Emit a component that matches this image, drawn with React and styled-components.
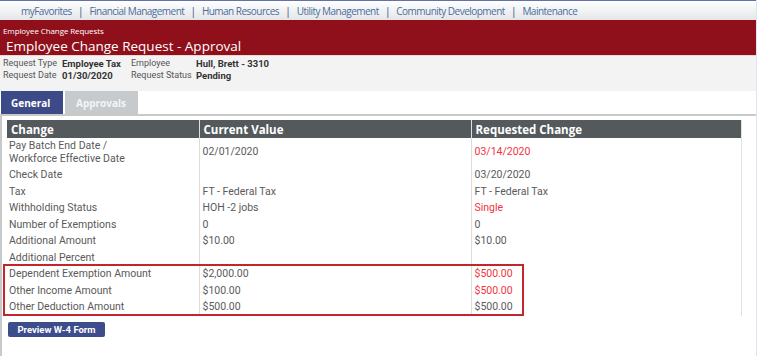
import React from "react";
import styled, { createGlobalStyle } from "styled-components";

const navItems = [
  "myFavorites",
  "Financial Management",
  "Human Resources",
  "Utility Management",
  "Community Development",
  "Maintenance",
];

const rows = [
  { label: ["Pay Batch End Date /", "Workforce Effective Date"], current: "02/01/2020", requested: "03/14/2020", changed: true },
  { label: ["Check Date"], current: "", requested: "03/20/2020" },
  { label: ["Tax"], current: "FT - Federal Tax", requested: "FT - Federal Tax" },
  { label: ["Withholding Status"], current: "HOH -2 jobs", requested: "Single", changed: true },
  { label: ["Number of Exemptions"], current: "0", requested: "0" },
  { label: ["Additional Amount"], current: "$10.00", requested: "$10.00" },
  { label: ["Additional Percent"], current: "", requested: "" },
  { label: ["Dependent Exemption Amount"], current: "$2,000.00", requested: "$500.00", changed: true },
  { label: ["Other Income Amount"], current: "$100.00", requested: "$500.00", changed: true },
  { label: ["Other Deduction Amount"], current: "$500.00", requested: "$500.00" },
];

const App = () => {
  return (
    <>
      <GlobalStyle />
      <Page>
        <NavBar>
          {navItems.map((item, i) => (
            <React.Fragment key={item}>
              {i > 0 && <Sep>|</Sep>}
              <NavLink>{item}</NavLink>
            </React.Fragment>
          ))}
        </NavBar>

        <Banner>
          <Crumb>Employee Change Requests</Crumb>
          <Title>Employee Change Request - Approval</Title>
        </Banner>

        <InfoStrip>
          <Label>Request Type</Label>
          <Value>Employee Tax</Value>
          <Label>Employee</Label>
          <Value>Hull, Brett - 3310</Value>
          <Label>Request Date</Label>
          <Value>01/30/2020</Value>
          <Label>Request Status</Label>
          <Value>Pending</Value>
        </InfoStrip>

        <TabRow>
          <Tab $active>General</Tab>
          <Tab>Approvals</Tab>
        </TabRow>

        <Panel>
          <TableWrap>
            <Table>
              <colgroup>
                <col style={{ width: 192 }} />
                <col style={{ width: 272 }} />
                <col style={{ width: 270 }} />
              </colgroup>
              <thead>
                <tr>
                  <Th>Change</Th>
                  <Th>Current Value</Th>
                  <Th>Requested Change</Th>
                </tr>
              </thead>
              <tbody>
                {rows.map((r) => (
                  <tr key={r.label.join(" ")}>
                    <Td>
                      {r.label.map((l) => (
                        <div key={l}>{l}</div>
                      ))}
                    </Td>
                    <Td>{r.current}</Td>
                    <Td $changed={r.changed}>{r.requested}</Td>
                  </tr>
                ))}
              </tbody>
            </Table>
            <Highlight />
          </TableWrap>
          <PreviewButton>Preview W-4 Form</PreviewButton>
        </Panel>
      </Page>
    </>
  );
};

const GlobalStyle = createGlobalStyle`
  body {
    margin: 0;
    background: #fff;
    font-family: Roboto, "Liberation Sans", sans-serif;
  }
`;

const Page = styled.div`
  width: 757px;
  height: 356px;
  overflow: hidden;
  border-right: 1px solid #e2e2f2;
  box-sizing: border-box;
`;

const NavBar = styled.div`
  height: 20px;
  box-sizing: border-box;
  border-top: 1px solid #6470ad;
  background: linear-gradient(#ffffff, #e3e6e9);
  display: flex;
  align-items: center;
  padding-left: 21px;
  gap: 6px;
  font-family: "Open Sans", sans-serif;
  font-size: 10px;
  letter-spacing: -0.52px;
  color: #4c6b99;
`;

const NavLink = styled.span`
  white-space: nowrap;
`;

const Sep = styled.span`
  color: #3b5a8c;
  font-size: 11px;
`;

const Banner = styled.div`
  height: 36px;
  background: #8f0f1b;
  color: #fff;
  font-family: "Open Sans", sans-serif;
  padding: 6px 0 0 3px;
  box-sizing: border-box;
  border-bottom: 1px solid #e8d6d8;
`;

const Crumb = styled.div`
  font-size: 8px;
  line-height: 10px;
  letter-spacing: -0.1px;
`;

const Title = styled.div`
  font-size: 13.5px;
  line-height: 18px;
  padding-left: 3px;
  margin-top: 1px;
`;

const InfoStrip = styled.div`
  background: #f3f3f3;
  height: 35px;
  box-sizing: border-box;
  padding: 1px 0 0 3px;
  display: grid;
  grid-template-columns: 59px 69px 65px 1fr;
  grid-auto-rows: 12px;
  align-items: center;
  font-size: 9px;
`;

const Label = styled.span`
  color: #555;
  white-space: nowrap;
`;

const Value = styled.span`
  color: #333;
  font-weight: bold;
  font-size: 9.5px;
  white-space: nowrap;
`;

const TabRow = styled.div`
  display: flex;
  gap: 2px;
  padding-left: 1px;
  height: 23px;
  border-bottom: 2px solid #c9c9c9;
`;

const Tab = styled.div`
  width: ${(p) => (p.$active ? "62px" : "73px")};
  background: ${(p) => (p.$active ? "#3c4b88" : "#c6cacd")};
  color: ${(p) => (p.$active ? "#fff" : "#f4f5f6")};
  font-family: "Open Sans", sans-serif;
  font-weight: bold;
  font-size: 10px;
  display: flex;
  align-items: center;
  padding-left: ${(p) => (p.$active ? "10px" : "11px")};
  box-sizing: border-box;
`;

const Panel = styled.div`
  border-left: 2px solid #c9c9c9;
  padding: 4px 0 0 5px;
  height: 300px;
`;

const TableWrap = styled.div`
  position: relative;
  width: 734px;
`;

const Table = styled.table`
  width: 734px;
  table-layout: fixed;
  border-collapse: collapse;
  font-size: 10.5px;
  color: #5a5a5a;
  border-right: 1px solid #e2e2e2;
`;

const Th = styled.th`
  background: #545a5c;
  color: #fff;
  font-family: "Open Sans", sans-serif;
  font-weight: bold;
  font-size: 11.5px;
  text-align: left;
  height: 18px;
  padding: 0 4px;
  border-left: 1px solid #e0e0e0;
  &:first-child {
    border-left: none;
  }
`;

const Td = styled.td`
  padding: 2px 3px;
  line-height: 12.5px;
  vertical-align: middle;
  white-space: nowrap;
  border-left: 1px solid #dcdcdc;
  color: ${(p) => (p.$changed ? "#f2343f" : "#5a5a5a")};
  &:first-child {
    border-left: none;
    padding-left: 2px;
  }
`;

const Highlight = styled.div`
  position: absolute;
  left: -4px;
  top: 144px;
  width: 521px;
  height: 52px;
  border: 2px solid #c0262c;
  box-sizing: border-box;
  pointer-events: none;
`;

const PreviewButton = styled.button`
  margin: 6px 0 0 1px;
  width: 97px;
  height: 15px;
  padding: 0;
  border: none;
  border-radius: 2px;
  background: #3d4c8a;
  color: #fff;
  font-family: Roboto, sans-serif;
  font-weight: bold;
  font-size: 9.5px;
`;

export default App;
